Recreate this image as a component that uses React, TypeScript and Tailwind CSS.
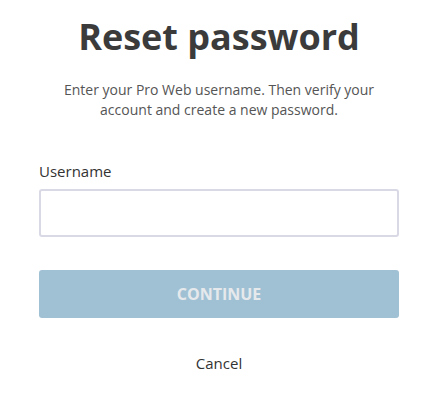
export default function App() {
  return (
    <div className="min-h-screen bg-white pl-[39px] pt-[15px] font-['Open_Sans',sans-serif]">
      <div className="w-[360px] flex flex-col">
        <h1 className="text-center text-[36px] leading-[44px] font-bold text-[#3b3b3b]">
          Reset password
        </h1>

        <p className="mt-[21px] px-4 text-center text-sm leading-[20px] text-[#555555]">
          Enter your Pro Web username. Then verify your account and create a new password.
        </p>

        <label className="mt-[41px] text-[15px] leading-[20px] text-[#333333]">Username</label>
        <input
          type="text"
          className="mt-[8px] h-[48px] w-full rounded-[3px] border-2 border-[#d9d9e6] bg-white px-3 outline-none"
        />

        <button
          disabled
          className="mt-[33px] h-[48px] w-full rounded-[3px] bg-[#a0c1d4] text-base font-bold text-[#e6e9ec]"
        >
          CONTINUE
        </button>

        <button className="mt-[35px] self-center text-[15px] leading-[20px] text-[#333333]">Cancel</button>
      </div>
    </div>
  );
}
